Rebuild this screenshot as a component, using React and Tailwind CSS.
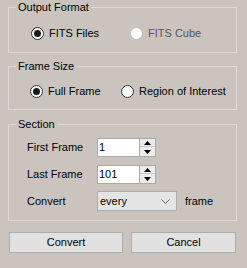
import React from 'react';

function Radio({ checked, disabled, label, className }) {
  return <label className={`flex items-center ${className}`}>
      <span className={`flex h-[13px] w-[13px] shrink-0 items-center justify-center rounded-full border bg-white ${disabled ? 'border-[#bcbcbc]' : 'border-[#333333]'}`}>
        {checked && <span className="h-[7px] w-[7px] rounded-full bg-[#1a1a1a]" />}
      </span>
      <span className={`ml-[5px] ${disabled ? 'text-[#555555]' : 'text-black'}`}>{label}</span>
    </label>;
}

function Group({ title, className, children }) {
  return <fieldset className={`ml-2 w-[229px] border border-[#dcdcdc] ${className}`}>
      <legend className="ml-[7px] px-[2px] leading-[13px] text-black">{title}</legend>
      {children}
    </fieldset>;
}

function Arrow({ up }) {
  return <svg width="7" height="4" viewBox="0 0 7 4">
      {up ? <path d="M3.5 0 L7 4 L0 4 Z" fill="#000" /> : <path d="M0 0 L7 0 L3.5 4 Z" fill="#000" />}
    </svg>;
}

function Spin({ value }) {
  return <div className="flex h-[19px] w-[59px] border border-[#a9a9a9] bg-white">
      <span className="flex-1 pl-[1px] leading-[17px] text-black">{value}</span>
      <div className="flex w-[16px] flex-col border-l border-[#a9a9a9]">
        <div className="flex h-[8px] items-center justify-center border-b border-[#c8c8c8] bg-[#ececec]"><Arrow up /></div>
        <div className="flex flex-1 items-center justify-center bg-[#ececec]"><Arrow /></div>
      </div>
    </div>;
}

export default function App() {
  return <div className="h-[268px] w-[247px] overflow-hidden bg-[#cbc4be] pt-[1px] font-['Liberation_Sans',Arial,sans-serif] text-[11px]">
      <Group title="Output Format">
        <div className="flex h-[38px] items-center pl-[22px]">
          <Radio checked label="FITS Files" className="w-[99px]" />
          <Radio disabled label="FITS Cube" />
        </div>
      </Group>
      <Group title="Frame Size" className="mt-[7px]">
        <div className="flex h-[36px] items-center pl-[21px]">
          <Radio checked label="Full Frame" className="w-[91px]" />
          <Radio label="Region of Interest" />
        </div>
      </Group>
      <Group title="Section" className="mt-[8px]">
        <div className="flex h-[89px] flex-col pl-[18px] pt-[7px]">
          <div className="flex items-center">
            <span className="w-[70px] text-black">First Frame</span>
            <Spin value="1" />
          </div>
          <div className="mt-[8px] flex items-center">
            <span className="w-[70px] text-black">Last Frame</span>
            <Spin value="101" />
          </div>
          <div className="mt-[7px] flex items-center">
            <span className="w-[70px] text-black">Convert</span>
            <div className="flex h-[20px] w-[80px] items-center justify-between border border-[#adadad] bg-[#e5e5e5] pl-[2px] pr-[6px]">
              <span className="text-black">every</span>
              <svg width="9" height="5" viewBox="0 0 9 5"><path d="M0.5 0.5 L4.5 4.5 L8.5 0.5" fill="none" stroke="#606060" strokeWidth="1" /></svg>
            </div>
            <span className="ml-[8px] text-black">frame</span>
          </div>
        </div>
      </Group>
      <div className="mt-[11px] flex pl-[9px]">
        <button className="h-[21px] w-[114px] border border-[#adadad] bg-[#e1e1e1] text-black">Convert</button>
        <button className="ml-[8px] h-[21px] w-[105px] border border-[#adadad] bg-[#e1e1e1] text-black">Cancel</button>
      </div>
    </div>;
}
